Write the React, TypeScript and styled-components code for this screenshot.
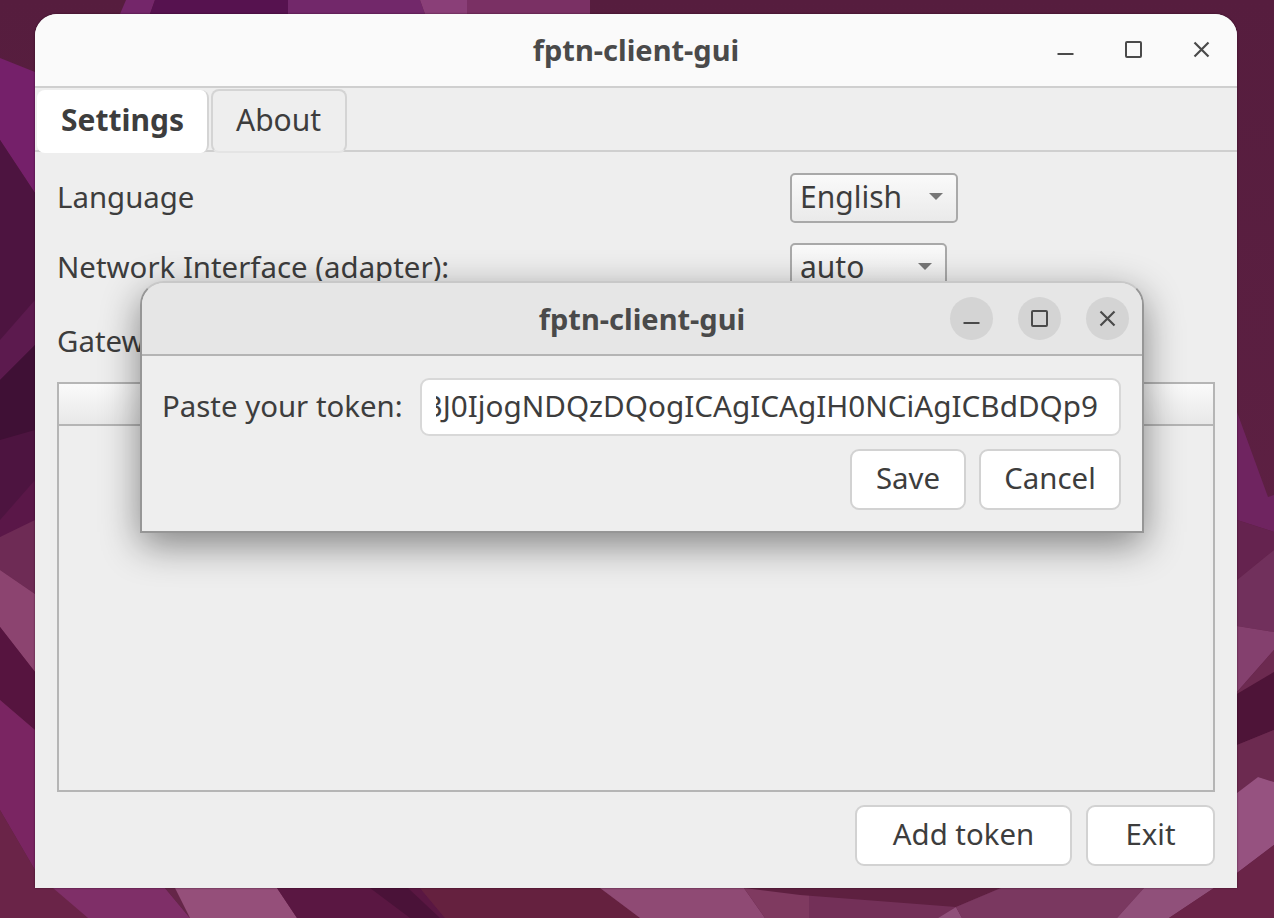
import styled, { createGlobalStyle } from "styled-components"

const GlobalStyle = createGlobalStyle`
  html, body { margin: 0; height: 100%; }
  body { overflow: hidden; font-family: "Noto Sans", "Open Sans", sans-serif; color: #3d3d3d; }
`

const wallpaperShapes: [string, string][] = [
  // top edge
  ["126,0 155,0 150,14 120,14", "#74266a"],
  ["155,0 288,0 288,14 150,14", "#56124f"],
  ["288,0 420,0 425,14 288,14", "#72286a"],
  ["420,0 467,0 467,14 425,14", "#8a3f78"],
  ["467,0 590,0 590,14 467,14", "#7a3064"],
  // left edge
  ["0,58 35,72 35,193 0,140", "#75206a"],
  ["0,140 35,193 35,560 0,560", "#4d1440"],
  ["0,340 35,300 35,345 0,380", "#5c1a4e"],
  ["0,380 35,345 35,430 0,440", "#3f1035"],
  ["0,520 35,480 35,525 0,537", "#5a1748"],
  ["0,537 35,520 35,594 0,570", "#6e2b55"],
  ["0,570 35,594 35,672 0,627", "#8c4470"],
  ["0,627 35,672 35,730 0,700", "#56143f"],
  ["0,700 35,730 35,870 0,810", "#7a2562"],
  ["0,810 35,870 88,918 0,918", "#6a2448"],
  // bottom edge
  ["53,888 165,888 190,918 88,918", "#7f2f68"],
  ["165,888 175,888 190,918", "#652648"],
  ["175,888 277,888 297,918 190,918", "#954f7a"],
  ["277,888 420,888 445,918 297,918", "#5a1742"],
  ["370,888 408,888 440,918 410,918", "#4a1238"],
  ["420,888 600,888 640,918 445,918", "#65213f"],
  ["600,888 744,888 765,918 640,918", "#8f4a74"],
  ["744,888 809,888 809,918 765,918", "#7f3a60"],
  ["809,888 1001,888 956,907 938,918 809,918", "#733058"],
  ["744,888 1001,888 956,907 800,895", "#5e2040"],
  ["956,907 938,918 962,918", "#90507a"],
  ["1001,888 1144,888 1117,918 962,918 956,907", "#7a3860"],
  ["1144,888 1214,888 1169,918 1117,918", "#90507a"],
  ["1214,888 1274,888 1274,918 1169,918", "#6a2448"],
  // right edge
  ["1237,412 1268,497 1274,495 1274,532 1237,520", "#6f2460"],
  ["1237,520 1274,532 1274,550 1237,580", "#65234f"],
  ["1237,580 1274,550 1274,632 1237,626", "#71305c"],
  ["1237,626 1274,632 1274,650 1237,692", "#84406e"],
  ["1237,692 1274,650 1274,672 1237,694", "#6c2a50"],
  ["1237,694 1274,672 1274,730 1237,745", "#4e1438"],
  ["1237,745 1274,730 1274,782 1258,777 1237,793", "#6c2a50"],
  ["1237,793 1258,777 1274,782 1274,845 1237,873", "#965280"],
  ["1237,873 1274,845 1274,888 1237,888", "#6a2448"],
]

const Wallpaper = () => (
  <WallpaperSvg viewBox="0 0 1274 918" preserveAspectRatio="none">
    <defs>
      <linearGradient id="base" x1="0" y1="0" x2="0" y2="1">
        <stop offset="0" stopColor="#561d3e" />
        <stop offset="1" stopColor="#622246" />
      </linearGradient>
    </defs>
    <rect width="1274" height="918" fill="url(#base)" />
    {wallpaperShapes.map(([points, fill]) => (
      <polygon key={points} points={points} fill={fill} />
    ))}
  </WallpaperSvg>
)

const MinIcon = () => (
  <svg width="17" height="17" viewBox="0 0 17 17"><path d="M0.5 13h16" stroke="#4a4a4a" strokeWidth="2" fill="none" /></svg>
)
const MaxIcon = () => (
  <svg width="17" height="17" viewBox="0 0 17 17"><rect x="1" y="1" width="15" height="15" rx="1" stroke="#4a4a4a" strokeWidth="2" fill="none" /></svg>
)
const CloseIcon = () => (
  <svg width="17" height="17" viewBox="0 0 17 17"><path d="M1.5 1.5l14 14M15.5 1.5l-14 14" stroke="#4a4a4a" strokeWidth="2.2" fill="none" /></svg>
)

const App = () => {
  return (
    <Desktop>
      <GlobalStyle />
      <Wallpaper />
      <MainWindow>
        <TitleBar>
          <Title>fptn-client-gui</Title>
          <WindowControls>
            <PlainControl><MinIcon /></PlainControl>
            <PlainControl><MaxIcon /></PlainControl>
            <PlainControl><CloseIcon /></PlainControl>
          </WindowControls>
        </TitleBar>
        <TabBar>
          <Tab $active>Settings</Tab>
          <Tab>About</Tab>
        </TabBar>
        <Content>
          <FormRow>
            <Label>Language</Label>
            <Combo $width={168}>English<Arrow /></Combo>
          </FormRow>
          <FormRow>
            <Label>Network Interface (adapter):</Label>
            <Combo $width={157}>auto<Arrow /></Combo>
          </FormRow>
          <GatewayRow>
            <Label>Gateway (router) IP:</Label>
          </GatewayRow>
          <TokenTable>
            <TableHeader />
          </TokenTable>
          <Actions>
            <Button $width={217}>Add token</Button>
            <Button $width={129}>Exit</Button>
          </Actions>
        </Content>
      </MainWindow>

      <Dialog>
        <DialogTitleBar>
          <Title>fptn-client-gui</Title>
          <DialogControls>
            <RoundControl><MinIcon /></RoundControl>
            <RoundControl><MaxIcon /></RoundControl>
            <RoundControl><CloseIcon /></RoundControl>
          </DialogControls>
        </DialogTitleBar>
        <DialogBody>
          <TokenRow>
            <Label>Paste your token:</Label>
            <TokenField>
              <TokenClip>
                <TokenText>3J0IjogNDQzDQogICAgICAgIH0NCiAgICBdDQp9</TokenText>
              </TokenClip>
            </TokenField>
          </TokenRow>
          <DialogActions>
            <Button $width={116}>Save</Button>
            <Button $width={142}>Cancel</Button>
          </DialogActions>
        </DialogBody>
      </Dialog>
    </Desktop>
  )
}

export default App

/* STYLED COMPONENTS */
const Desktop = styled.div`
  position: relative;
  width: 1274px;
  height: 918px;
  overflow: hidden;
  font-size: 29.4px;
  line-height: 40px;
`

const WallpaperSvg = styled.svg`
  position: absolute;
  inset: 0;
  width: 100%;
  height: 100%;
`

const MainWindow = styled.div`
  position: absolute;
  left: 35px;
  top: 14px;
  width: 1202px;
  height: 874px;
  display: flex;
  flex-direction: column;
  background: #eeeeee;
  border-radius: 22px 22px 0 0;
  box-shadow: 0 0 2px rgba(30, 0, 20, 0.7);
`

const TitleBar = styled.div`
  flex: none;
  height: 72px;
  display: grid;
  grid-template-columns: 1fr auto 1fr;
  align-items: center;
  background: #fafafa;
  border-bottom: 2px solid #cfcfcf;
  border-radius: 22px 22px 0 0;
`

const Title = styled.div`
  grid-column: 2;
  font-size: 29px;
  font-weight: 700;
  color: #4a4a4a;
`

const WindowControls = styled.div`
  justify-self: end;
  padding: 0 27px 0 0;
  margin-top: -2px;
  display: flex;
  gap: 51px;
`

const PlainControl = styled.div`
  width: 17px;
  height: 17px;
  display: flex;
`

const TabBar = styled.div`
  flex: none;
  height: 62px;
  display: flex;
  gap: 2px;
  padding-left: 2px;
  border-bottom: 2px solid #cfcfcf;
`

const Tab = styled.div<{ $active?: boolean }>`
  height: ${p => (p.$active ? "60px" : "57px")};
  margin-top: ${p => (p.$active ? "2px" : "1px")};
  padding: ${p => (p.$active ? "0 23px 3px 24px" : "0 24px 3px 23px")};
  display: flex;
  align-items: center;
  background: ${p => (p.$active ? "#ffffff" : "#eeeeee")};
  border: 2px solid #d4d4d4;
  border-top: ${p => (p.$active ? "none" : "2px solid #d4d4d4")};
  border-bottom: ${p => (p.$active ? "none" : "2px solid #e4e4e4")};
  border-left: ${p => (p.$active ? "none" : "2px solid #d4d4d4")};
  border-radius: 8px;
  font-size: 30px;
  font-weight: ${p => (p.$active ? 700 : 400)};
`

const Content = styled.div`
  flex: 1;
  min-height: 0;
  display: flex;
  flex-direction: column;
  padding: 21px 22px 22px;
`

const FormRow = styled.div`
  flex: none;
  height: 50px;
  margin-bottom: 20px;
  display: grid;
  grid-template-columns: 733px auto;
  justify-content: start;
  align-items: center;
`

const GatewayRow = styled.div`
  flex: none;
  height: 40px;
  margin-top: 9px;
  display: flex;
  align-items: center;
`

const Label = styled.div`
  white-space: nowrap;
  flex: none;
  margin-top: -3px;
`

const Combo = styled.div<{ $width: number }>`
  box-sizing: border-box;
  width: ${p => p.$width}px;
  height: 50px;
  padding: 0 13px 3px 8px;
  display: flex;
  align-items: center;
  justify-content: space-between;
  border: 2px solid #a9a9a9;
  border-radius: 5px;
  background: linear-gradient(#fafafa, #eaeaea);
  font-size: 30px;
`

const Arrow = styled.span`
  width: 0;
  height: 0;
  border-left: 7.5px solid transparent;
  border-right: 7.5px solid transparent;
  border-top: 7px solid #777777;
`

const TokenTable = styled.div`
  flex: 1;
  min-height: 0;
  margin-top: 20px;
  border: 2px solid #b5b5b5;
`

const TableHeader = styled.div`
  height: 40px;
  background: linear-gradient(#fafafa, #e8e8e8);
  border-bottom: 2px solid #b5b5b5;
`

const Actions = styled.div`
  flex: none;
  margin-top: 13px;
  display: flex;
  justify-content: flex-end;
  gap: 14px;
`

const Button = styled.div<{ $width: number }>`
  box-sizing: border-box;
  width: ${p => p.$width}px;
  height: 61px;
  padding-bottom: 3px;
  display: flex;
  align-items: center;
  justify-content: center;
  background: #ffffff;
  border: 2px solid #d2d2d2;
  border-radius: 9px;
`

const Dialog = styled.div`
  position: absolute;
  left: 140px;
  top: 281px;
  box-sizing: border-box;
  width: 1004px;
  height: 252px;
  display: flex;
  flex-direction: column;
  background: #eeeeee;
  border: 2px solid #969696;
  border-top-color: #c8c8c8;
  border-radius: 24px 24px 0 0;
  box-shadow: 0 12px 38px rgba(0, 0, 0, 0.45);
`

const DialogTitleBar = styled.div`
  flex: none;
  height: 71px;
  display: grid;
  grid-template-columns: 1fr auto 1fr;
  align-items: center;
  background: #e6e6e6;
  border-bottom: 2px solid #b4b4b4;
  border-radius: 22px 22px 0 0;
`

const DialogControls = styled.div`
  justify-self: end;
  padding-right: 13px;
  display: flex;
  gap: 25px;
`

const RoundControl = styled.div`
  width: 43px;
  height: 43px;
  display: flex;
  align-items: center;
  justify-content: center;
  border-radius: 50%;
  background: #d4d4d4;
`

const DialogBody = styled.div`
  flex: 1;
  display: flex;
  flex-direction: column;
  padding: 22px 21px 0 20px;
`

const TokenRow = styled.div`
  display: flex;
  align-items: center;
  justify-content: space-between;
`

const TokenField = styled.div`
  box-sizing: border-box;
  width: 701px;
  height: 58px;
  padding: 0 21px 3px 14px;
  display: flex;
  align-items: center;
  background: #ffffff;
  border: 2px solid #d8d8d8;
  border-radius: 9px;
`

const TokenClip = styled.div`
  flex: 1;
  min-width: 0;
  display: flex;
  justify-content: flex-end;
  overflow: hidden;
`

const TokenText = styled.span`
  flex: none;
  white-space: nowrap;
  font-size: 29.7px;
`

const DialogActions = styled.div`
  margin-top: 13px;
  display: flex;
  justify-content: flex-end;
  gap: 13px;
`
